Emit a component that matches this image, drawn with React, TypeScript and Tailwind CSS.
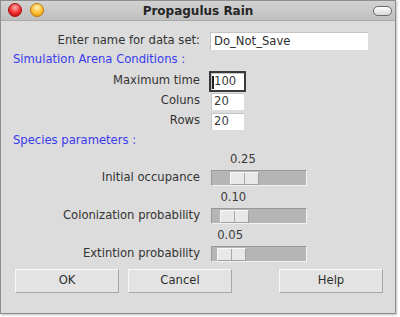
import React from 'react'

const labelCls = 'w-[200px] shrink-0 pr-[1px] text-right'

function Field({ value, width, focused }: { value: string; width: number; focused?: boolean }) {
  return (
    <div
      className={
        'relative flex h-[17px] items-center bg-white pl-[2px] leading-none text-[#3a3a3a] border-t border-l border-[#c4c4c4] ' +
        (focused ? 'outline-2 outline-[#3a3a3a]' : '')
      }
      style={{ width }}
    >
      {focused && <span className="absolute left-0 top-[2px] h-[13px] w-[2px] bg-[#222]" />}
      {value}
    </div>
  )
}

function Slider({ label, value }: { label: string; value: number }) {
  const left = 2 + value * 64
  return (
    <div className="flex flex-col">
      <div className="flex h-[18px] items-center">
        <div className="w-[210px] shrink-0" />
        <span className="text-[#3a3a3a]" style={{ marginLeft: left + 1 }}>
          {value.toFixed(2)}
        </span>
      </div>
      <div className="flex h-[17px] items-center">
        <div className={labelCls}>{label}</div>
        <div className="ml-[10px] relative h-[16px] w-[96px] bg-[#b5b5b5] border border-t-[#999999] border-l-[#999999] border-b-[#f2f2f2] border-r-[#f2f2f2]">
          <div
            className="absolute top-[1px] flex h-[13px] w-[29px] bg-[#e8e8e8] border border-t-[#f8f8f8] border-l-[#f8f8f8] border-b-[#a0a0a0] border-r-[#a0a0a0]"
            style={{ left }}
          >
            <div className="h-full w-1/2 border-r border-[#a8a8a8]" />
          </div>
        </div>
      </div>
    </div>
  )
}

function Btn({ children }: { children: React.ReactNode }) {
  return (
    <div className="flex h-[24px] w-[104px] items-center justify-center bg-[#e3e3e3] text-[#2e2e2e] border border-t-[#f8f8f8] border-l-[#f8f8f8] border-b-[#a6a6a6] border-r-[#a6a6a6]">
      {children}
    </div>
  )
}

export default function App() {
  return (
    <div className="h-[317px] w-[400px] bg-white" style={{ fontFamily: '"DejaVu Sans", sans-serif' }}>
      <div className="flex h-[314px] w-[396px] flex-col border border-[#8e8e8e] bg-[#dcdcdc] shadow-[1px_1px_2px_rgba(0,0,0,0.25)]">
        {/* title bar */}
        <div className="relative flex h-[20px] items-center justify-center border-b border-[#a9a9a9] bg-gradient-to-b from-[#d2d2d2] to-[#bfbfbf]">
          <div className="absolute left-[7px] top-[2px] flex gap-[8px]">
            <span className="h-[14px] w-[14px] rounded-full border border-[#a01010] bg-[radial-gradient(circle_at_50%_30%,#ffb0b0,#f02828_55%,#b00808)]" />
            <span className="h-[14px] w-[14px] rounded-full border border-[#c07a00] bg-[radial-gradient(circle_at_50%_30%,#fff2b8,#ffbe30_55%,#e08a00)]" />
          </div>
          <span className="text-[12px] font-bold text-[#262626]">Propagulus Rain</span>
          <span className="absolute right-[3px] top-[5px] h-[10px] w-[19px] rounded-full border border-[#6a6a6a] bg-gradient-to-b from-[#ffffff] to-[#d8d8d8]" />
        </div>

        <div className="flex flex-col text-[11.6px] text-[#333333]">
          {/* data set name */}
          <div className="mt-[11px] flex h-[18px] items-center">
            <div className={labelCls}>Enter name for data set:</div>
            <div className="ml-[9px]">
              <div className="flex h-[18px] w-[158px] items-center border-t border-l border-[#c4c4c4] bg-white pl-[3px] text-[#2e2e2e]">
                Do_Not_Save
              </div>
            </div>
          </div>

          <div className="flex h-[20px] items-center pl-[12px] text-[#3a3aee]">Simulation Arena Conditions :</div>

          <div className="mt-[1px] flex h-[20px] items-center">
            <div className={labelCls}>Maximum time</div>
            <div className="ml-[10px]"><Field value="100" width={33} focused /></div>
          </div>
          <div className="flex h-[20px] items-center">
            <div className={labelCls}>Coluns</div>
            <div className="ml-[10px]"><Field value="20" width={33} /></div>
          </div>
          <div className="flex h-[20px] items-center">
            <div className={labelCls}>Rows</div>
            <div className="ml-[10px]"><Field value="20" width={33} /></div>
          </div>

          <div className="flex h-[20px] items-center pl-[12px] text-[#3a3aee]">Species parameters :</div>

          <div className="flex flex-col gap-[3px]">
            <Slider label="Initial occupance" value={0.25} />
            <Slider label="Colonization probability" value={0.1} />
            <Slider label="Extintion probability" value={0.05} />
          </div>

          <div className="mt-[7px] flex pl-[14px]">
            <Btn>OK</Btn>
            <div className="ml-[9px]"><Btn>Cancel</Btn></div>
            <div className="ml-[47px]"><Btn>Help</Btn></div>
          </div>
        </div>
      </div>
    </div>
  )
}
